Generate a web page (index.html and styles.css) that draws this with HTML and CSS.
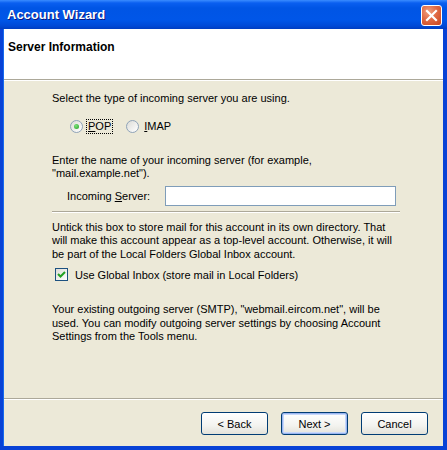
FILE: index.html
```html
<!DOCTYPE html>
<html>
<head>
<meta charset="utf-8">
<link rel="stylesheet" href="styles.css">
</head>
<body>
<div class="window">
  <div class="titlebar">
    <span class="title">Account Wizard</span>
    <div class="close"><svg width="13" height="13" viewBox="0 0 13 13"><path d="M2 2 L11 11 M11 2 L2 11" stroke="#fff" stroke-width="2.2" stroke-linecap="square"/></svg></div>
  </div>
  <div class="client">
    <div class="header"><span class="htitle">Server Information</span></div>
    <div class="content">
      <p class="t1">Select the type of incoming server you are using.</p>
      <div class="radios">
        <span class="radio checked"><span class="dot"></span></span><span class="rlabel focus"><u>P</u>OP</span>
        <span class="radio"></span><span class="rlabel"><u>I</u>MAP</span>
      </div>
      <p class="t2">Enter the name of your incoming server (for example,<br>"mail.example.net").</p>
      <div class="field">
        <span class="flabel">Incoming <u>S</u>erver:</span>
        <span class="input"></span>
      </div>
      <div class="sep"></div>
      <p class="t3">Untick this box to store mail for this account in its own directory. That will make this account appear as a top-level account. Otherwise, it will be part of the Local Folders Global Inbox account.</p>
      <div class="check">
        <span class="box"><svg width="11" height="11" viewBox="0 0 11 11"><path d="M2 5 L4.5 7.5 L9 3" fill="none" stroke="#21A121" stroke-width="2"/></svg></span>
        <span>Use Global Inbox (store mail in Local Folders)</span>
      </div>
      <p class="t4">Your existing outgoing server (SMTP), "webmail.eircom.net", will be used. You can modify outgoing server settings by choosing Account Settings from the Tools menu.</p>
    </div>
    <div class="footer">
      <button class="btn">&lt; Back</button>
      <button class="btn default">Next &gt;</button>
      <button class="btn">Cancel</button>
    </div>
  </div>
</div>
</body>
</html>
```
FILE: styles.css
```css
html, body { margin: 0; padding: 0; }
body { width: 447px; height: 450px; overflow: hidden; background: #ECE9D8; font-family: "Liberation Sans", Arial, sans-serif; font-size: 11px; color: #000; }
.window { width: 447px; height: 450px; box-sizing: border-box; display: flex; flex-direction: column; background: #0842D6; }
.titlebar { height: 29px; flex: none; display: flex; align-items: center; justify-content: space-between; padding: 0 5px 0 7px; background: linear-gradient(#3A8CFF 0px, #0A5FF0 3px, #0055E5 8px, #0056E8 20px, #0049D6 26px, #003DC0 29px); }
.title { color: #fff; font-weight: bold; font-size: 13px; text-shadow: 1px 1px 0 #0A1880; }
.close { width: 19px; height: 19px; border: 1px solid #fff; border-radius: 3px; background: radial-gradient(circle at 35% 30%, #F0A080 0%, #E06A45 45%, #C9441E 100%); display: flex; align-items: center; justify-content: center; margin-top: 2px; }
.close svg { display: block; }
.client { flex: 1; margin: 0 4px 4px 3px; background: #ECE9D8; display: flex; flex-direction: column; border-left: 1px solid #166AEE; }
.header { height: 51px; flex: none; background: #fff; border-bottom: 1px solid #ACA899; box-shadow: 0 1px 0 #fff; box-sizing: border-box; padding: 11px 0 0 4px; }
.htitle { font-weight: bold; font-size: 12px; }
.content { flex: 1; padding: 0 0 0 48px; }
p { margin: 0; line-height: 13.5px; }
.t1 { margin-top: 12px; }
.radios { display: flex; align-items: center; height: 15px; margin-top: 13px; padding-left: 18px; }
.radio { width: 11px; height: 11px; border: 1px solid #8FA3B8; border-radius: 50%; background: linear-gradient(135deg, #DCDCD7, #fff); display: flex; align-items: center; justify-content: center; }
.radio .dot { width: 5px; height: 5px; border-radius: 50%; background: radial-gradient(circle at 40% 35%, #7EE27E, #21A121); }
.rlabel { margin-left: 4px; padding: 0 1px; line-height: 13px; }
.rlabel.focus { outline: 1px dotted #000; margin-right: 14px; }
.t2 { margin-top: 20px; }
.field { display: flex; align-items: center; margin-top: 5px; padding-left: 15px; }
.flabel { width: 98px; }
.input { width: 229px; height: 18px; border: 1px solid #7F9DB9; background: #fff; }
.sep { height: 1px; background: #ACA899; border-bottom: 1px solid #fff; margin: 5px 0 0 0; width: 348px; }
.t3 { margin-top: 8px; width: 350px; }
.check { display: flex; align-items: center; margin-top: 7px; padding-left: 3px; }
.box { width: 11px; height: 11px; border: 1px solid #1C5180; background: linear-gradient(135deg, #DCDCD7, #fff); margin-right: 7px; display: flex; align-items: center; justify-content: center; }
.box svg { display: block; }
.t4 { margin-top: 22px; width: 350px; }
.footer { height: 48px; flex: none; border-top: 1px solid #ACA899; box-shadow: inset 0 1px 0 #fff; display: flex; align-items: flex-start; justify-content: flex-end; padding: 13px 15px 0 0; box-sizing: border-box; gap: 13px; }
.btn { width: 67px; height: 23px; border: 1px solid #003C74; border-radius: 3px; background: linear-gradient(#FFFFFF, #F3F3EF 60%, #E3E2DA); font-family: "Liberation Sans", Arial, sans-serif; font-size: 11px; color: #000; padding: 0; margin: 0; }
.btn.default { box-shadow: inset 0 0 0 1px #9AB5F0, inset 0 0 0 2px #C7D8FA; }
u { text-decoration: underline; }
```
